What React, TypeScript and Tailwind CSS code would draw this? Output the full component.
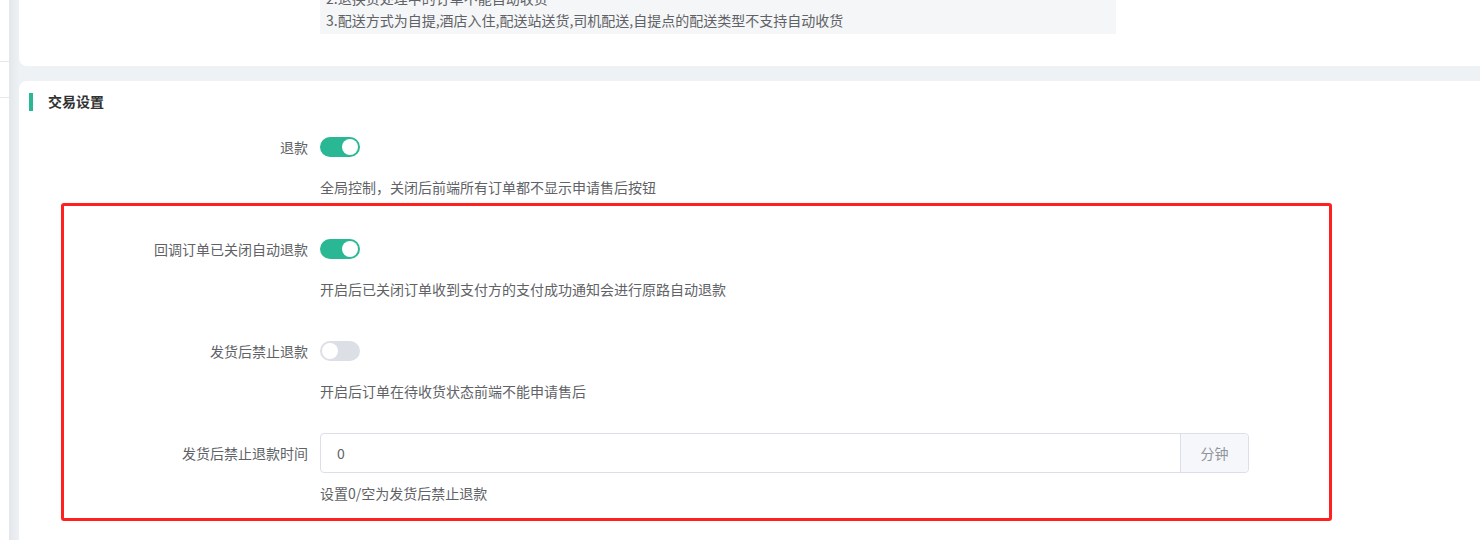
const font = { fontFamily: '"Noto Sans CJK SC", "Noto Sans", sans-serif' };

function Switch({ on }: { on: boolean }) {
  return (
    <div
      className={`flex h-5 w-10 items-center rounded-full px-[2px] ${
        on ? "justify-end bg-[#2ab894]" : "justify-start bg-[#dcdfe6]"
      }`}
    >
      <div className="h-4 w-4 rounded-full bg-white" />
    </div>
  );
}

function FormItem({
  label,
  help,
  children,
}: {
  label: string;
  help: string;
  children: React.ReactNode;
}) {
  return (
    <div className="flex">
      <div className="flex h-10 w-[301px] shrink-0 items-center justify-end pr-3 text-[14px] text-[#606266]">
        {label}
      </div>
      <div className="flex-1">
        <div className="flex h-10 items-center">{children}</div>
        <div className="mt-[10px] text-[14px] leading-[20px] text-[#606266]">{help}</div>
      </div>
    </div>
  );
}

export default function App() {
  return (
    <div className="flex h-[540px] w-[1480px] overflow-hidden bg-white" style={font}>
      {/* sidebar edge */}
      <div className="w-[9px] shrink-0 bg-white">
        <div className="h-[62px] border-b border-[#e6e8eb]" />
        <div className="h-[36px] border-b border-[#e6e8eb]" />
      </div>
      <div className="w-[10px] shrink-0 bg-gradient-to-r from-[#e3e7eb] to-[#eef1f4]" />

      <div className="flex flex-1 flex-col gap-[15px] bg-[#eff2f5]">
        {/* previous card, cut off at top */}
        <div className="flex h-[66px] flex-col justify-end overflow-hidden rounded-bl-lg bg-white pb-[32px]">
          <div className="ml-[301px] w-[796px] bg-[#f5f6f8] px-[6px] pb-[3px] text-[14px] leading-[22px] text-[#606266]">
            <div>2.退换货处理中的订单不能自动收货</div>
            <div>3.配送方式为自提,酒店入住,配送站送货,司机配送,自提点的配送类型不支持自动收货</div>
          </div>
        </div>

        {/* 交易设置 */}
        <div className="relative flex-1 rounded-tl-lg bg-white">
          <div className="mt-[12px] flex h-[18px] items-center">
            <div className="ml-[10px] h-[18px] w-[4px] bg-[#2ab894]" />
            <div className="ml-[15px] -mt-[2px] text-[14px] font-bold text-[#303133]">交易设置</div>
          </div>

          <div className="mt-[16px] flex flex-col gap-[32px]">
            <FormItem label="退款" help="全局控制，关闭后前端所有订单都不显示申请售后按钮">
              <Switch on />
            </FormItem>
            <FormItem label="回调订单已关闭自动退款" help="开启后已关闭订单收到支付方的支付成功通知会进行原路自动退款">
              <Switch on />
            </FormItem>
            <FormItem label="发货后禁止退款" help="开启后订单在待收货状态前端不能申请售后">
              <Switch on={false} />
            </FormItem>
            <FormItem label="发货后禁止退款时间" help="设置0/空为发货后禁止退款">
              <div className="flex h-10 w-[929px] rounded-[4px] border border-[#dcdfe6]">
                <div className="flex flex-1 items-center pl-[16px] text-[14px] text-[#606266]">0</div>
                <div className="flex w-[68px] items-center justify-center rounded-r-[4px] border-l border-[#dcdfe6] bg-[#f5f7fa] text-[14px] text-[#909399]">
                  分钟
                </div>
              </div>
            </FormItem>
          </div>

          {/* annotation box */}
          <div className="absolute left-[42px] top-[122px] h-[318px] w-[1271px] rounded-[3px] border-[3px] border-[#ff2020]" />
        </div>
      </div>
    </div>
  );
}
